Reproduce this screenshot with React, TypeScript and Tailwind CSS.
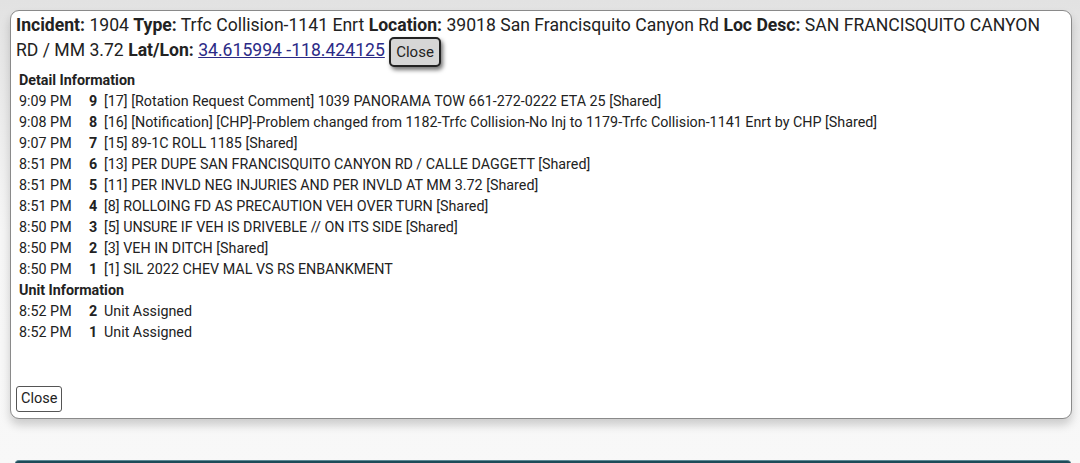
const details = [
  { time: "9:09 PM", n: 9, text: "[17] [Rotation Request Comment] 1039 PANORAMA TOW 661-272-0222 ETA 25 [Shared]" },
  { time: "9:08 PM", n: 8, text: "[16] [Notification] [CHP]-Problem changed from 1182-Trfc Collision-No Inj to 1179-Trfc Collision-1141 Enrt by CHP [Shared]" },
  { time: "9:07 PM", n: 7, text: "[15] 89-1C ROLL 1185 [Shared]" },
  { time: "8:51 PM", n: 6, text: "[13] PER DUPE SAN FRANCISQUITO CANYON RD / CALLE DAGGETT [Shared]" },
  { time: "8:51 PM", n: 5, text: "[11] PER INVLD NEG INJURIES AND PER INVLD AT MM 3.72 [Shared]" },
  { time: "8:51 PM", n: 4, text: "[8] ROLLOING FD AS PRECAUTION VEH OVER TURN [Shared]" },
  { time: "8:50 PM", n: 3, text: "[5] UNSURE IF VEH IS DRIVEBLE // ON ITS SIDE [Shared]" },
  { time: "8:50 PM", n: 2, text: "[3] VEH IN DITCH [Shared]" },
  { time: "8:50 PM", n: 1, text: "[1] SIL 2022 CHEV MAL VS RS ENBANKMENT" },
];

const units = [
  { time: "8:52 PM", n: 2, text: "Unit Assigned" },
  { time: "8:52 PM", n: 1, text: "Unit Assigned" },
];

type Row = { time: string; n: number; text: string };

const LogRows = ({ rows }: { rows: Row[] }) => (
  <div>
    {rows.map((r, i) => (
      <div key={i} className="grid grid-cols-[70px_15px_1fr] leading-[21px]">
        <span>{r.time}</span>
        <span className="font-bold">{r.n}</span>
        <span>{r.text}</span>
      </div>
    ))}
  </div>
);

export default function App() {
  return (
    <div
      className="h-[463px] overflow-hidden bg-gradient-to-b from-[#e2e2e2] via-[#f6f6f6] to-[#f8f8f8] pt-[10px] px-[9px] text-[#222]"
      style={{ fontFamily: "Roboto, 'Liberation Sans', sans-serif" }}
    >
      <div className="h-[409px] ml-px w-[1062px] rounded-[9px] border border-[#8a8a8a] bg-white px-[5px] pt-[2px] shadow-[0_6px_10px_rgba(0,0,0,0.18)] flex flex-col">
        <div className="text-[17.6px] leading-[25px]">
          <b>Incident:</b> 1904 <b>Type:</b> Trfc Collision-1141 Enrt <b>Location:</b> 39018 San Francisquito Canyon Rd{" "}
          <b>Loc Desc:</b> SAN FRANCISQUITO CANYON RD / MM 3.72 <b>Lat/Lon:</b>{" "}
          <a href="#" className="text-[#2b2a86] underline">
            34.615994 -118.424125
          </a>{" "}
          <button className="inline-block align-middle relative top-px -my-[4px] h-[30px] px-[5px] rounded-[5px] border-2 border-[#222] bg-[#d6d6d6] text-[15px] leading-none shadow-[2px_3px_4px_rgba(0,0,0,0.55)]">
            Close
          </button>
        </div>
        <div className="ml-[3px] mt-[7px] text-[14.3px]">
          <div className="font-bold leading-[21px]">Detail Information</div>
          <LogRows rows={details} />
          <div className="font-bold leading-[21px]">Unit Information</div>
          <LogRows rows={units} />
        </div>
        <div className="mt-auto mb-[6px]">
          <button className="h-[26px] px-[4px] rounded-[3px] border border-[#555] bg-white text-[14.5px] leading-none">
            Close
          </button>
        </div>
      </div>
      <div className="mt-[41px] ml-[6px] w-[1056px] h-[10px] rounded-t-[4px] bg-[#1d4b58] border-t border-[#5e8a96]" />
    </div>
  );
}
